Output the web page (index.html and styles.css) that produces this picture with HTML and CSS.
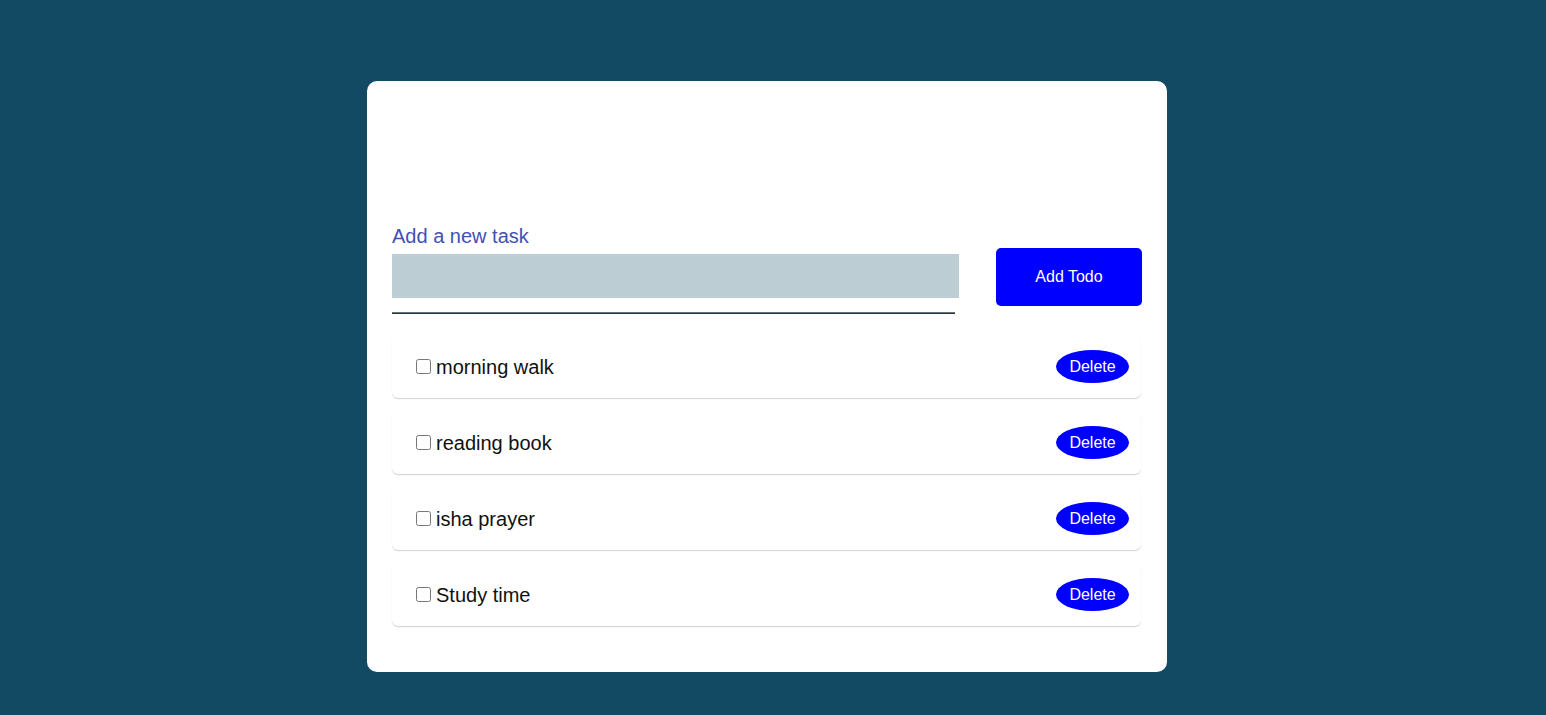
FILE: index.html
```html
<!DOCTYPE html>
<html lang="en">
<head>
<meta charset="utf-8">
<title>Todo</title>
<link rel="stylesheet" href="styles.css">
</head>
<body>
<main class="card">
  <div class="card-head"></div>
  <form class="add-row">
    <div class="field">
      <label class="field-label" for="task">Add a new task</label>
      <input id="task" class="field-input" type="text">
      <div class="field-line"></div>
    </div>
    <button type="button" class="add-btn">Add Todo</button>
  </form>
  <ul class="list">
    <li class="item"><label class="item-label"><input type="checkbox" class="item-check"><span class="item-text">morning walk</span></label><button type="button" class="del-btn">Delete</button></li>
    <li class="item"><label class="item-label"><input type="checkbox" class="item-check"><span class="item-text">reading book</span></label><button type="button" class="del-btn">Delete</button></li>
    <li class="item"><label class="item-label"><input type="checkbox" class="item-check"><span class="item-text">isha prayer</span></label><button type="button" class="del-btn">Delete</button></li>
    <li class="item"><label class="item-label"><input type="checkbox" class="item-check"><span class="item-text">Study time</span></label><button type="button" class="del-btn">Delete</button></li>
  </ul>
</main>
</body>
</html>
```

FILE: styles.css
```css
* { box-sizing: border-box; }
html, body { margin: 0; padding: 0; }
body {
  background: #124a63;
  font-family: "Liberation Sans", Arial, sans-serif;
  min-height: 715px;
  padding: 81px 12px 0 0;
}
.card {
  width: 800px;
  height: 591px;
  margin: 0 auto;
  background: #fff;
  border-radius: 10px;
  padding: 25px 25px 0 25px;
}
.card-head { height: 118px; }
.add-row {
  display: flex;
  align-items: flex-start;
  gap: 37px;
}
.field { width: 567px; display: flex; flex-direction: column; }
.field-label {
  font-size: 20px;
  line-height: 25px;
  color: #3f51b5;
}
.field-input {
  margin-top: 5px;
  height: 44px;
  width: 567px;
  border: none;
  background: #bccdd3;
  outline: none;
  padding: 0 10px;
  font-size: 18px;
}
.field-line {
  margin-top: 14px;
  width: 563px;
  height: 2px;
  border-top: 1px solid #6e6e7a;
  background: #2525a8;
}
.add-btn {
  margin-top: 24px;
  width: 146px;
  height: 58px;
  border: none;
  border-radius: 5px;
  background: #0000ff;
  color: #fff;
  font-family: "Liberation Sans", Arial, sans-serif;
  font-size: 16px;
}
.list {
  list-style: none;
  margin: 21px 0 0 0;
  padding: 0;
  width: 749px;
}
.item {
  height: 63px;
  margin-bottom: 13px;
  display: flex;
  align-items: center;
  justify-content: space-between;
  padding: 0 12px 0 20px;
  border-radius: 6px;
  box-shadow: 0 1px 1px rgba(0, 0, 0, 0.18);
}
.item-label {
  display: flex;
  align-items: center;
  font-size: 20px;
  color: #111;
}
.item-text { padding-top: 2px; }
.item-check {
  margin: 0 5px 1px 4px;
  width: 15px;
  height: 15px;
}
.del-btn {
  width: 73px;
  height: 33px;
  border: none;
  border-radius: 50%;
  background: #0000ff;
  color: #fff;
  font-family: "Liberation Sans", Arial, sans-serif;
  font-size: 16px;
  padding: 0;
}
```
